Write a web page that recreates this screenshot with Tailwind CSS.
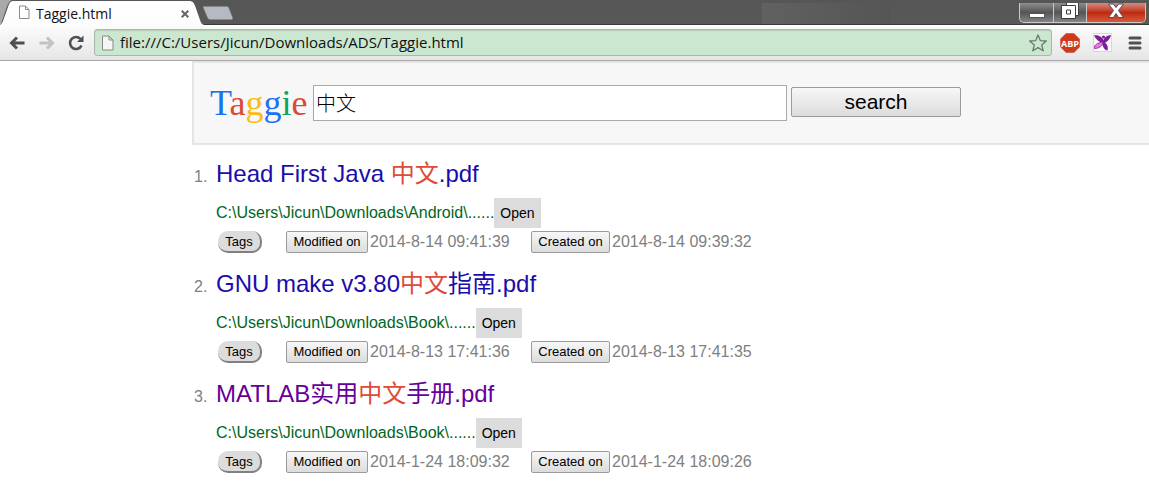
<!DOCTYPE html>
<html lang="en">
<head>
<meta charset="utf-8">
<title>Taggie.html</title>
<script src="https://cdn.jsdelivr.net/npm/@tailwindcss/browser@4"></script>
</head>
<body class="bg-white font-['Liberation_Sans','Noto_Sans_CJK_SC',sans-serif] text-base text-[#808080]">

<header class="border-b border-[#a8a8a8]">
  <!-- tab strip -->
  <div class="relative flex h-[25px] items-stretch justify-between bg-gradient-to-b from-[#565656] to-[#585858] pr-[2px] shadow-[inset_0_-1px_0_#3a3838]">
    <div class="absolute left-[762px] top-[3px] h-[21px] w-32 bg-gradient-to-r from-[#616161] to-[#555555]"></div>
    <div class="relative flex">
      <div class="relative flex w-[206px] items-center pl-[18px] pr-[17px]">
        <svg class="absolute left-0 top-0 h-[25px] w-[206px]" viewBox="0 0 206 25" aria-hidden="true">
          <defs><linearGradient id="tab" x1="0" y1="0" x2="0" y2="1"><stop offset="0" stop-color="#fff"/><stop offset="1" stop-color="#fcfcfc"/></linearGradient></defs>
          <path d="M0 0H12C9 1 8 4 6 9L2 21C1.500 23 1 24 0 25Z" fill="#a9a9a9"/>
          <path d="M0 25C2 24 2.500 22 3 21L8 7C9.500 3 10 1 14 1H189C193 1 194 3 195.500 7L200 20C201 23 202 25 206 25Z" fill="url(#tab)"/>
        </svg>
        <svg class="relative h-[15px] w-3" viewBox="0 0 12 15" fill="#fff" stroke="#8a8a8a" aria-hidden="true"><path d="M1.500 1H7.500L11 4.500V13.500H1.500ZM7.500 1V4.500H11"/></svg>
        <span class="relative ml-[6px] pt-[2px] text-[14px] leading-5 text-[#111] font-['Open_Sans','Noto_Sans',sans-serif]">Taggie.html</span>
        <button aria-label="Close tab" class="relative ml-auto pt-[2px]"><svg class="h-2 w-2" viewBox="0 0 8 8" stroke="#666" stroke-width="2"><path d="M.700 .700L7.300 7.300M7.300 .700L.700 7.300"/></svg></button>
      </div>
      <button aria-label="New tab" class="-ml-1 self-start pt-[6px]"><svg class="h-[14px] w-[32px]" viewBox="0 0 32 14"><path d="M2 .500H24C26 .500 26.500 1 27 2.500L30.500 11.500C31 13 30.500 13.500 29 13.500H9C7 13.500 6 13 5.500 11.500L1.500 2C1 1 1 .500 2 .500Z" fill="#b5bac2" stroke="#85888d" stroke-width=".6"/></svg></button>
    </div>
    <div class="relative mb-[2px] mr-px mt-[3px] flex overflow-hidden rounded-b-[5px] border border-t-0 border-[#c9c9c9] bg-gradient-to-b from-[#8e8e8e] via-[#555] to-[#858585]">
      <button aria-label="Minimize" class="flex w-[34px] items-end justify-center border-r border-[#c9c9c9] pb-[4px]"><svg class="h-[5px] w-4" viewBox="0 0 16 5"><rect x=".5" y=".5" width="15" height="4" fill="#fff" stroke="#555"/></svg></button>
      <button aria-label="Restore" class="flex w-[33px] items-start justify-center border-r border-[#c9c9c9]"><svg class="h-4 w-[18px]" viewBox="0 0 18 16" fill="#fff" stroke="#3d3d4a"><path d="M5.500 -.500H17.500V12.500H5.500Z"/><path d="M.500 2.500H14.500V15.500H.500ZM5.500 7V11H9.500V7Z" fill-rule="evenodd"/></svg></button>
      <button aria-label="Close" class="flex w-[58px] items-start justify-center bg-gradient-to-b from-[#d48a7c] via-[#bd2a10] to-[#d8583a]"><svg class="h-[15px] w-4" viewBox="0 0 16 15"><path d="M.500 1H5.500L8 4.500L10.500 1H15.500L10.500 7.500L15.500 14.500H10.500L8 10.500L5.500 14.500H.500L5.500 7.500Z" fill="#fff" stroke="#55485a"/></svg></button>
    </div>
  </div>

  <!-- toolbar -->
  <div class="flex h-[35px] items-center bg-gradient-to-b from-[#fcfcfc] to-[#e6e6e6] pl-[9px] pr-[7px]">
    <button aria-label="Back"><svg class="h-4 w-4" viewBox="0 0 16 16" fill="none" stroke="#4f4f4f" stroke-width="3"><path d="M15.500 8H3M8 2.500L2.500 8L8 13.500"/></svg></button>
    <button aria-label="Forward" class="ml-[14px]"><svg class="h-4 w-4" viewBox="0 0 16 16" fill="none" stroke="#c3c3c3" stroke-width="3"><path d="M.500 8H13M8 2.500L13.500 8L8 13.500"/></svg></button>
    <button aria-label="Reload" class="ml-[13px]"><svg class="h-4 w-4" viewBox="0 0 16 16" fill="none" stroke="#4f4f4f" stroke-width="2.600"><path d="M13.500 10.500A6 6 0 1 1 12.500 4"/><path d="M15.500 .500V7H9Z" fill="#4f4f4f" stroke="none"/></svg></button>
    <div class="ml-[10px] flex h-[27px] min-w-0 flex-1 items-center rounded-[3px] border border-[#a6b9ab] bg-[#cbe7d0] pl-[7px] pr-1 shadow-[inset_0_1px_1px_#b5ccb9]">
      <svg class="h-4 w-3 shrink-0" viewBox="0 0 12 16" fill="#f6f6f6" stroke="#8a8a8a" aria-hidden="true"><path d="M.500 1H7L11 5V15H.500ZM7 1V5H11"/></svg>
      <input aria-label="Address" value="file:///C:/Users/Jicun/Downloads/ADS/Taggie.html" class="ml-[6px] h-[22px] min-w-0 flex-1 bg-transparent text-[15px] text-[#111] outline-none font-['Open_Sans','Noto_Sans',sans-serif]">
      <button aria-label="Bookmark"><svg class="h-[18px] w-[18px]" viewBox="0 0 18 18" fill="none" stroke="#68796c" stroke-width="1.300" stroke-linejoin="round"><path d="M9 1L11.300 6.600L17.300 7L12.700 10.900L14.200 16.800L9 13.600L3.800 16.800L5.300 10.900L.700 7L6.700 6.600Z"/></svg></button>
    </div>
    <button aria-label="Adblock Plus" class="ml-2"><svg class="h-5 w-5" viewBox="0 0 20 20"><path d="M6 .500H14L19.500 6V14L14 19.500H6L.500 14V6Z" fill="#cf3a1c" stroke="#b5432b" stroke-width=".5"/><text x="10" y="13.500" font-family="Open Sans" font-weight="bold" font-size="9" text-anchor="middle" fill="#fff">ABP</text></svg></button>
    <button aria-label="Extension" class="ml-[13px]"><svg class="h-[19px] w-[19px]" viewBox="0 0 19 19"><rect x=".5" y=".5" width="18" height="18" fill="#fcf8fe" stroke="#ddd3e2"/><g fill="#7b1f96"><path d="M10 10C6 9 2.500 6 1 2.500C5 1.500 9.500 4 11 8Z"/><path d="M10 8.500C11 4 14 2.500 18 2C17.500 5 15 8.500 11 10.500Z"/><path d="M10.500 9C14 10 15.500 14 14.500 17.500C11.500 17.500 9.500 13 9 10Z"/><circle cx="10.500" cy="4" r="1.600"/></g><path d="M10 9C10 12.500 6.500 15.500 1.500 15.500C.500 12 5 9.500 10 9Z" fill="#ea78dd" stroke="#7b1f96" stroke-width=".8"/></svg></button>
    <button aria-label="Menu" class="ml-4"><svg class="h-[14px] w-[14px]" viewBox="0 0 14 14" stroke="#505050" stroke-width="3" stroke-linecap="round"><path d="M2 2H12M2 7H12M2 12H12"/></svg></button>
  </div>
</header>

<main class="ml-48">
  <form class="flex h-[84px] items-center border-y-2 border-l-2 border-[#e5e5e5] bg-[#f7f7f7] pl-4" onsubmit="return false">
    <div class="w-[103px] font-['Liberation_Serif',serif] text-[36px] leading-10"><span class="text-[#1a73f0]">T</span><span class="text-[#d84a38]">a</span><span class="text-[#fdbb12]">g</span><span class="text-[#1a73f0]">g</span><span class="text-[#0fa35c]">i</span><span class="text-[#d84a38]">e</span></div>
    <input aria-label="Search" value="中文" class="h-9 w-[474px] border border-[#a9a9a9] bg-white px-[2px] pb-[2px] text-[20px] text-black outline-none font-['Liberation_Sans','Noto_Sans_CJK_SC',sans-serif] font-light">
    <button class="mb-[2px] ml-1 h-[30px] w-[170px] rounded-[2px] border border-[#9b9b9b] bg-gradient-to-b from-[#f7f7f7] to-[#dcdcdc] text-[21px] leading-6 text-black">search</button>
  </form>

  <ol class="pt-[11px]">
    <li class="mb-[13px] grid grid-cols-[24px_1fr]">
      <span class="flex h-9 items-center pl-[2px] pt-[6px]">1.</span>
      <div>
        <h3 class="flex h-9 items-center text-[24px]"><a href="#" class="whitespace-pre text-[#1a0dab]">Head First Java <em class="not-italic text-[#dd4b39]">中文</em>.pdf</a></h3>
        <div class="mt-[6px] flex h-[30px] items-center text-[#006621]"><cite class="not-italic">C:\Users\Jicun\Downloads\Android\......</cite><button class="h-full bg-[#dcdcdc] px-[6px] text-[14px] text-black">Open</button></div>
        <div class="mt-[3px] flex h-[22px] items-center">
          <button class="ml-[2px] h-[22px] w-11 rounded-[10px] border-b-2 border-r-2 border-[#808080] bg-[#dcdcdc] pt-[2px] text-[13px] leading-4 text-black">Tags</button>
          <button class="ml-6 mr-[2px] h-[22px] w-[82px] rounded-[2px] border border-[#9b9b9b] bg-gradient-to-b from-[#f7f7f7] to-[#dcdcdc] text-[13px] leading-4 text-black">Modified on</button>
          <time class="w-[161px]">2014-8-14 09:41:39</time>
          <button class="mr-[2px] h-[22px] w-[79px] rounded-[2px] border border-[#9b9b9b] bg-gradient-to-b from-[#f7f7f7] to-[#dcdcdc] text-[13px] leading-4 text-black">Created on</button>
          <time>2014-8-14 09:39:32</time>
        </div>
      </div>
    </li>
    <li class="mb-[13px] grid grid-cols-[24px_1fr]">
      <span class="flex h-9 items-center pl-[2px] pt-[6px]">2.</span>
      <div>
        <h3 class="flex h-9 items-center text-[24px]"><a href="#" class="whitespace-pre text-[#1a0dab]">GNU make v3.80<em class="not-italic text-[#dd4b39]">中文</em>指南.pdf</a></h3>
        <div class="mt-[6px] flex h-[30px] items-center text-[#006621]"><cite class="not-italic">C:\Users\Jicun\Downloads\Book\......</cite><button class="h-full bg-[#dcdcdc] px-[6px] text-[14px] text-black">Open</button></div>
        <div class="mt-[3px] flex h-[22px] items-center">
          <button class="ml-[2px] h-[22px] w-11 rounded-[10px] border-b-2 border-r-2 border-[#808080] bg-[#dcdcdc] pt-[2px] text-[13px] leading-4 text-black">Tags</button>
          <button class="ml-6 mr-[2px] h-[22px] w-[82px] rounded-[2px] border border-[#9b9b9b] bg-gradient-to-b from-[#f7f7f7] to-[#dcdcdc] text-[13px] leading-4 text-black">Modified on</button>
          <time class="w-[161px]">2014-8-13 17:41:36</time>
          <button class="mr-[2px] h-[22px] w-[79px] rounded-[2px] border border-[#9b9b9b] bg-gradient-to-b from-[#f7f7f7] to-[#dcdcdc] text-[13px] leading-4 text-black">Created on</button>
          <time>2014-8-13 17:41:35</time>
        </div>
      </div>
    </li>
    <li class="mb-[13px] grid grid-cols-[24px_1fr]">
      <span class="flex h-9 items-center pl-[2px] pt-[6px]">3.</span>
      <div>
        <h3 class="flex h-9 items-center text-[24px]"><a href="#" class="whitespace-pre text-[#660099]">MATLAB实用<em class="not-italic text-[#dd4b39]">中文</em>手册.pdf</a></h3>
        <div class="mt-[6px] flex h-[30px] items-center text-[#006621]"><cite class="not-italic">C:\Users\Jicun\Downloads\Book\......</cite><button class="h-full bg-[#dcdcdc] px-[6px] text-[14px] text-black">Open</button></div>
        <div class="mt-[3px] flex h-[22px] items-center">
          <button class="ml-[2px] h-[22px] w-11 rounded-[10px] border-b-2 border-r-2 border-[#808080] bg-[#dcdcdc] pt-[2px] text-[13px] leading-4 text-black">Tags</button>
          <button class="ml-6 mr-[2px] h-[22px] w-[82px] rounded-[2px] border border-[#9b9b9b] bg-gradient-to-b from-[#f7f7f7] to-[#dcdcdc] text-[13px] leading-4 text-black">Modified on</button>
          <time class="w-[161px]">2014-1-24 18:09:32</time>
          <button class="mr-[2px] h-[22px] w-[79px] rounded-[2px] border border-[#9b9b9b] bg-gradient-to-b from-[#f7f7f7] to-[#dcdcdc] text-[13px] leading-4 text-black">Created on</button>
          <time>2014-1-24 18:09:26</time>
        </div>
      </div>
    </li>
  </ol>
</main>
</body>
</html>
